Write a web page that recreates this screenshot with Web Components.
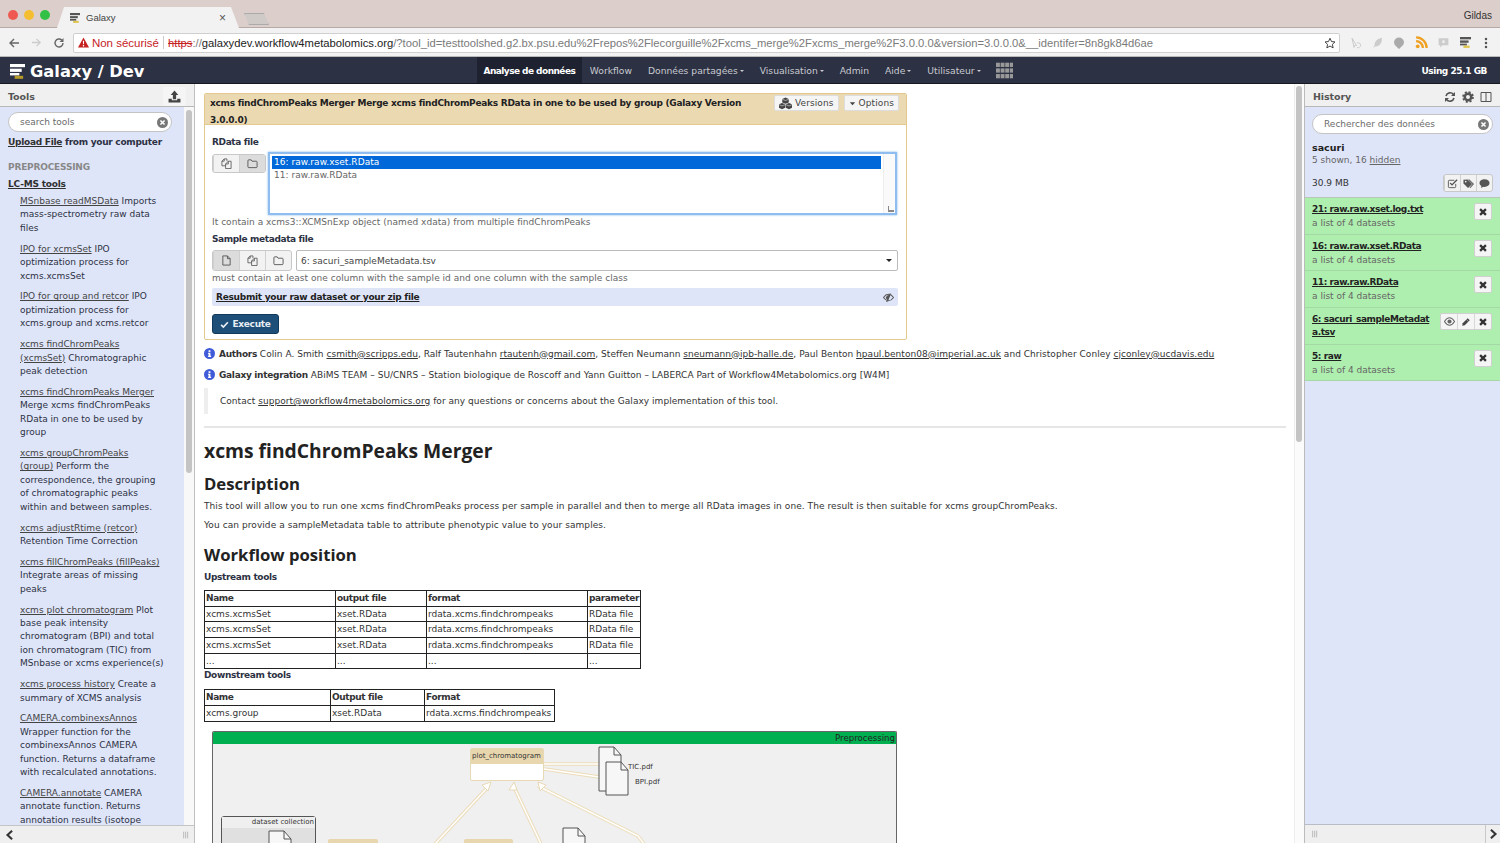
<!DOCTYPE html>
<html lang="fr">
<head>
<meta charset="utf-8">
<title>Galaxy</title>
<style>
html, body { margin: 0; padding: 0; height: 843px; overflow: hidden; background: #fff; }
body { font-family: "DejaVu Sans", sans-serif; font-size: 9px; color: #2c3143; display: flex; flex-direction: column; }
a { color: #303030; text-decoration: underline; }
</style>
</head>
<body>
<browser-chrome></browser-chrome>
<galaxy-masthead></galaxy-masthead>
<galaxy-layout>
  <tools-panel slot="left"></tools-panel>
  <center-panel slot="center"></center-panel>
  <history-panel slot="right"></history-panel>
</galaxy-layout>

<script>
// icons, hand drawn on a 24x24 box
const ICONS = {
    times: '<path d="M5 5L19 19M19 5L5 19" fill="none" stroke="currentColor" stroke-width="5.5"/>',
    check: '<path d="M3 13l6 6L21 6" fill="none" stroke="currentColor" stroke-width="4.5"/>',
    files: '<path d="M13 7V2H7L2 7v10h8M7 2v5H2" fill="none" stroke="currentColor" stroke-width="1.8"/><path d="M10 13l6-6h6v16H10zM16 7v6h-6" fill="none" stroke="currentColor" stroke-width="1.8"/>',
    folder: '<path d="M2 19V6q0-2 2-2h5l2 3h9q2 0 2 2v10q0 2-2 2H4q-2 0-2-2z" fill="none" stroke="currentColor" stroke-width="2"/>',
    file: '<path d="M4 2h10l6 6v14H4zM14 2v6h6" fill="none" stroke="currentColor" stroke-width="2"/>',
    eye: '<path d="M1 12q5-8 11-8t11 8q-5 8-11 8T1 12z" fill="none" stroke="currentColor" stroke-width="2.2"/><circle cx="12" cy="12" r="4.5" fill="currentColor"/>',
    eyeoff: '<path d="M1 12q5-7 11-7t11 7q-5 7-11 7T1 12z" fill="none" stroke="currentColor" stroke-width="2.2"/><path d="M6 12q2-5 7-6l3 1-5 12q-4-2-5-7z" fill="currentColor"/><path d="M16 3L8 22" stroke="currentColor" stroke-width="2.5"/>',
    pencil: '<path d="M3 21l1-6L16 3l5 5L9 20z" fill="currentColor"/><path d="M13 6l5 5" stroke="#f5f5f5" stroke-width="1.2"/>',
    cog: '<circle cx="12" cy="12" r="6.5" fill="none" stroke="currentColor" stroke-width="5"/><circle cx="12" cy="12" r="10" fill="none" stroke="currentColor" stroke-width="3.4" stroke-dasharray="4.2 3.65"/>',
    refresh: '<path d="M4 10a8.5 8.5 0 0 1 15-3" fill="none" stroke="currentColor" stroke-width="3.2"/><path d="M22 2v8h-8z" fill="currentColor"/><path d="M20 14a8.5 8.5 0 0 1-15 3" fill="none" stroke="currentColor" stroke-width="3.2"/><path d="M2 22v-8h8z" fill="currentColor"/>',
    columns: '<path d="M2 3h20v18H2zM12 3v18" fill="none" stroke="currentColor" stroke-width="2"/>',
    tags: '<path d="M1 4v8l10 10 9-9L10 3z" fill="currentColor"/><path d="M14 3l10 10-8 9-2-1 7-8L11 3z" fill="currentColor"/><circle cx="6" cy="8" r="1.8" fill="#f5f5f5"/>',
    comment: '<ellipse cx="12" cy="11" rx="11" ry="8.5" fill="currentColor"/><path d="M6 16l-2 6 8-4z" fill="currentColor"/>',
    checkbox: '<path d="M19 13v6q0 2-2 2H5q-2 0-2-2V7q0-2 2-2h11" fill="none" stroke="currentColor" stroke-width="2"/><path d="M7 11l4 4L22 4" fill="none" stroke="currentColor" stroke-width="3"/>',
    upload: '<path d="M12 1l7 8h-4v8H9V9H5z" fill="currentColor"/><path d="M1 16h6v3h10v-3h6v7H1z" fill="currentColor"/>',
    cubes: '<path d="M12 1l6 2.5V10l-6 2.5L6 10V3.5zM5.5 11l6 2.5V20l-6 2.5L0 20v-6.5zM18.5 11l5.5 2.5V20l-5.500 2.5-6-2.5v-6.5z" fill="currentColor"/><path d="M6 4l6 2.5L18 4M0 14l5.5 2.5 6-2.5M12.5 14l6 2.5L24 14" fill="none" stroke="#f5f5f5" stroke-width="1"/>',
    caret: '<path d="M3 8h18l-9 10z" fill="currentColor"/>',
    info: '<circle cx="12" cy="12" r="12" fill="currentColor"/><path d="M10 5h4v3.5h-4zM9 10.5h5V17h1.500v2.5H9V17h1v-4H9z" fill="#fff"/>',
    clear: '<circle cx="12" cy="12" r="12" fill="currentColor"/><path d="M7.5 7.5l9 9M16.5 7.5l-9 9" stroke="#fff" stroke-width="3.4"/>',
    back: '<path d="M22 12H5M12 4l-8 8 8 8" fill="none" stroke="currentColor" stroke-width="2.8"/>',
    forward: '<path d="M2 12h17M12 4l8 8-8 8" fill="none" stroke="currentColor" stroke-width="2.8"/>',
    reload: '<path d="M20 12a8 8 0 1 1-2.5-5.8" fill="none" stroke="currentColor" stroke-width="2.8"/><path d="M21 2v8h-8z" fill="currentColor"/>',
    star: '<path d="M12 2.5l3 6.6 7 .8-5.2 4.8 1.5 7-6.3-3.6-6.3 3.6 1.5-7L2 9.9l7-.8z" fill="none" stroke="currentColor" stroke-width="2"/>',
    warn: '<path d="M12 1L24 23H0z" fill="currentColor"/><path d="M10.6 8h2.800l-.5 8h-1.800zM10.6 17.5h2.800v3h-2.800z" fill="#fff"/>',
    rss: '<circle cx="5" cy="19" r="3.5" fill="currentColor"/><path d="M2 9.5A12.5 12.500 0 0 1 14.5 22M2 2.5A19.5 19.500 0 0 1 21.5 22" fill="none" stroke="currentColor" stroke-width="4.2"/>',
    dots: '<circle cx="12" cy="4" r="2.5" fill="currentColor"/><circle cx="12" cy="12" r="2.5" fill="currentColor"/><circle cx="12" cy="20" r="2.5" fill="currentColor"/>',
    bubble: '<path d="M12 1a10 10 0 0 1 10 10c0 5-5 8-10 13C7 19 2 16 2 11A10 10 0 0 1 12 1z" fill="currentColor"/>',
    cursor: '<path d="M4 2l9 15-3-1-2 5zM14 12a5 5 0 1 1 0 9" fill="none" stroke="currentColor" stroke-width="2"/>',
    feather: '<path d="M20 2C10 3 5 9 5 17l-3 5 4-3c9 0 14-6 14-17z" fill="currentColor"/>',
    chat: '<path d="M3 4h18v13H10l-4 4v-4H3z" fill="currentColor"/><path d="M10 8h4v5h-4z" fill="#f2f2f2"/>',
    grid: '<g fill="currentColor"><rect x="0" y="1" width="5.5" height="6"/><rect x="6.5" y="1" width="5.5" height="6"/><rect x="13" y="1" width="5.5" height="6"/><rect x="19.5" y="1" width="4.5" height="6"/><rect x="0" y="9" width="5.5" height="6"/><rect x="6.5" y="9" width="5.5" height="6"/><rect x="13" y="9" width="5.5" height="6"/><rect x="19.5" y="9" width="4.5" height="6"/><rect x="0" y="17" width="5.5" height="6"/><rect x="6.5" y="17" width="5.5" height="6"/><rect x="13" y="17" width="5.5" height="6"/><rect x="19.5" y="17" width="4.5" height="6"/></g>',
    chevl: '<path d="M17 2L6 12l11 10" fill="none" stroke="currentColor" stroke-width="5"/>',
    chevr: '<path d="M7 2l11 10L7 22" fill="none" stroke="currentColor" stroke-width="5"/>',
    handle: '<path d="M5 2v20M11 2v20M17 2v20" stroke="currentColor" stroke-width="3"/>'
};

class FaIcon extends HTMLElement {
    connectedCallback() {
        if (this.shadowRoot) return;
        this.attachShadow({ mode: 'open' });
        const size = this.getAttribute('size') || 11;
        this.shadowRoot.innerHTML = `
            <style>:host { display: inline-flex; flex: none; } svg { display: block; }</style>
            <svg width="${size}" height="${size}" viewBox="0 0 24 24">${ICONS[this.getAttribute('name')] || ''}</svg>`;
    }
}

// logo bars, used in the tab and the masthead
class GalaxyLogo extends HTMLElement {
    connectedCallback() {
        this.attachShadow({ mode: 'open' });
        const c = this.getAttribute('color') || '#fff';
        const w = this.getAttribute('width') || 16;
        this.shadowRoot.innerHTML = `
            <style>:host { display: inline-flex; flex: none; } svg { display: block; }</style>
            <svg width="${w}" viewBox="0 0 16 16">
                <rect x="0" y="0" width="16" height="3.4" fill="${c}"/>
                <rect x="0" y="5" width="12.5" height="3.4" fill="${c}"/>
                <rect x="0" y="9.6" width="10" height="2.6" fill="${c}"/>
                <rect x="5" y="12.6" width="9" height="3.2" fill="#d9b81f" opacity=".8"/>
            </svg>`;
    }
}

class BrowserChrome extends HTMLElement {
    connectedCallback() {
        this.attachShadow({ mode: 'open' });
        this.shadowRoot.innerHTML = `
            <style>
                :host { display: block; font-family: "Liberation Sans", sans-serif; }
                .strip { height: 28px; box-sizing: border-box; background: #dccfcb; display: flex; align-items: flex-end; padding-left: 8px; border-bottom: 1px solid #b5aaa6; }
                .lights { display: flex; gap: 6px; width: 49px; align-self: flex-start; padding-top: 10px; }
                .lights i { width: 10px; height: 10px; border-radius: 50%; }
                .tab { width: 182px; height: 21px; margin-bottom: -1px; background: #f2f2f2; clip-path: polygon(0 100%, 7px 0, 174px 0, 100% 100%); display: flex; align-items: center; padding-left: 13px; box-sizing: border-box; font-size: 9.5px; color: #444; }
                .tab span { margin-left: 6px; flex: 1; }
                .tab b { font-weight: normal; font-size: 12px; color: #555; margin-right: 13px; }
                .newtab { width: 25px; height: 12px; margin: 0 0 2px 5px; background: #cfcac8; border: 1px solid #aaa; box-sizing: border-box; clip-path: polygon(0 0, 80% 0, 100% 100%, 20% 100%); }
                .user { margin-left: auto; align-self: flex-start; padding: 10px 8px 0 0; font-size: 10px; color: #333; }
                .bar { height: 29px; box-sizing: border-box; background: #f2f2f2; display: flex; align-items: center; padding: 1px 8px 0; border-bottom: 1px solid #b9b9b9; }
                .nav { display: flex; align-items: center; color: #666; gap: 11px; width: 65px; }
                .url { width: 1269px; height: 20px; box-sizing: border-box; background: #fff; border: 1px solid #d0d0d0; border-radius: 2px; display: flex; align-items: center; padding-left: 4px; font-size: 11.24px; white-space: nowrap; overflow: hidden; color: #7a7a7a; position: relative; }
                .warn { color: #c5221f; margin-left: 3px; font-size: 11.5px; }
                .sep { width: 1px; height: 13px; background: #ccc; margin: 0 4px; }
                s { color: #c5221f; }
                .dom { color: #222; }
                .url fa-icon:last-child { position: absolute; right: 3px; top: 3px; color: #444; }
                .ext { display: flex; align-items: center; margin-left: 10px; gap: 9.5px; color: #ccc; }
            </style>
            <div class="strip">
                <div class="lights"><i style="background:#ee5a52"></i><i style="background:#f5bd30"></i><i style="background:#32c146"></i></div>
                <div class="tab"><galaxy-logo color="#555" width="10"></galaxy-logo><span>Galaxy</span><b>×</b></div>
                <div class="newtab"></div>
                <div class="user">Gildas</div>
            </div>
            <div class="bar">
                <div class="nav"><fa-icon name="back" size="12"></fa-icon><fa-icon name="forward" size="11" style="color:#ccc"></fa-icon><fa-icon name="reload" size="12"></fa-icon></div>
                <div class="url">
                    <fa-icon name="warn" size="11" style="color:#c5221f"></fa-icon><span class="warn">Non sécurisé</span><span class="sep"></span><s>https</s>://<span class="dom">galaxydev.workflow4metabolomics.org</span>/?tool_id=testtoolshed.g2.bx.psu.edu%2Frepos%2Flecorguille%2Fxcms_merge%2Fxcms_merge%2F3.0.0.0&amp;version=3.0.0.0&amp;__identifer=8n8gk84d6ae
                    <fa-icon name="star" size="12"></fa-icon>
                </div>
                <div class="ext">
                    <fa-icon name="cursor" size="12"></fa-icon><fa-icon name="feather" size="12"></fa-icon><fa-icon name="bubble" size="12" style="color:#aaa"></fa-icon><fa-icon name="rss" size="13" style="color:#f0a020"></fa-icon><fa-icon name="chat" size="13"></fa-icon><galaxy-logo color="#555" width="11"></galaxy-logo><fa-icon name="dots" size="12" style="color:#555"></fa-icon>
                </div>
            </div>`;
    }
}

class GalaxyMasthead extends HTMLElement {
    connectedCallback() {
        this.attachShadow({ mode: 'open' });
        const items = [
            ['Analyse de données', 0, 1], ['Workflow', 0], ['Données partagées', 1], ['Visualisation', 1],
            ['Admin', 0], ['Aide', 1], ['Utilisateur', 1]
        ];
        const nav = items.map(([t, caret, on]) =>
            `<a class="${on ? 'on' : ''}">${t}${caret ? '<u></u>' : ''}</a>`).join('');
        this.shadowRoot.innerHTML = `
            <style>
                :host { display: flex; height: 27px; box-sizing: border-box; background: #2c3143; border-bottom: 1px solid #16181f; align-items: stretch; color: #ddd; font-size: 9.2px; flex: none; }
                .brand { width: 477px; display: flex; align-items: center; padding: 2px 0 0 10px; box-sizing: border-box; gap: 5px; color: #fff; font-weight: bold; font-size: 16.3px; }
                nav { display: flex; align-items: stretch; }
                a { display: flex; align-items: center; padding: 1px 8px 0; color: #c8cad0; }
                a.on { background: #1d2130; color: #fff; font-weight: bold; padding: 1px 6.5px 0; font-size: 9px; letter-spacing: -.55px; }
                a u { width: 0; height: 0; border: 2.5px solid transparent; border-top-color: #c8cad0; border-bottom: 0; margin-left: 2px; }
                .grid { display: flex; align-items: center; margin-left: 7px; color: #999; }
                .quota { margin-left: auto; align-self: center; padding: 1px 13px 0 0; color: #fff; font-weight: bold; font-size: 9px; letter-spacing: -.45px; }
            </style>
            <div class="brand"><galaxy-logo width="15"></galaxy-logo><span>Galaxy / Dev</span></div>
            <nav>${nav}</nav>
            <div class="grid"><fa-icon name="grid" size="17"></fa-icon></div>
            <div class="quota">Using 25.1 GB</div>`;
    }
}

class GalaxyLayout extends HTMLElement {
    constructor() {
        super();
        this.attachShadow({ mode: 'open' });
        this.shadowRoot.innerHTML = `
            <style>
                :host { display: grid; grid-template-columns: 195px 1110px 195px; height: 759px; flex: none; overflow: hidden; }
                ::slotted(*) { min-width: 0; height: 759px; }
            </style>
            <slot name="left"></slot><slot name="center"></slot><slot name="right"></slot>`;
    }
}

// grey title strip on top of a side panel
class PanelHead extends HTMLElement {
    constructor() {
        super();
        this.attachShadow({ mode: 'open' });
        this.shadowRoot.innerHTML = `
            <style>
                :host { display: flex; align-items: center; height: 23px; box-sizing: border-box; background: #f0f0f0; border-bottom: 1px solid #b8b8b8; padding: 3px 0 0 8px; font-weight: bold; color: #555; font-size: 9.5px; letter-spacing: -.1px; flex: none; }
                .r { margin-left: auto; display: flex; align-items: center; }
            </style>
            <slot></slot><div class="r"><slot name="tools"></slot></div>`;
    }
}

class SearchBox extends HTMLElement {
    connectedCallback() {
        this.attachShadow({ mode: 'open' });
        this.shadowRoot.innerHTML = `
            <style>
                :host { display: flex; align-items: center; box-sizing: border-box; height: 20px; background: #fff; border: 1px solid #c4c4c4; border-radius: 10px; color: #6b6b6b; font-size: 9px; padding: 0 3px 0 11px; }
                span { flex: 1; }
                fa-icon { color: #777; }
            </style>
            <span>${this.getAttribute('placeholder')}</span><fa-icon name="clear" size="11"></fa-icon>`;
    }
}

class ToolLink extends HTMLElement {
    constructor() {
        super();
        this.attachShadow({ mode: 'open' });
    }
    connectedCallback() {
        this.shadowRoot.innerHTML = `
            <style>
                :host { display: block; margin: 0 0 7.5px 20px; line-height: 13.4px; white-space: nowrap; color: #2c3143; }
                a { color: #444; text-decoration: underline; }
            </style>
            <a>${this.getAttribute('name')}</a> <slot></slot>`;
    }
}

class ToolsPanel extends HTMLElement {
    connectedCallback() {
        this.attachShadow({ mode: 'open' });
        this.shadowRoot.innerHTML = `
            <style>
                :host { display: flex; flex-direction: column; position: relative; background: #f8f8f8; border-right: 1px solid #c0c0c0; box-sizing: border-box; overflow: hidden; }
                .body { width: 184px; flex: 1; background: #dfe5f9; padding: 5px 0 0 8px; box-sizing: border-box; overflow: hidden; }
                panel-head { width: 195px; }
                search-box { width: 164px; margin-bottom: 4px; }
                .upload { font-weight: bold; line-height: 13px; letter-spacing: -.27px; }
                a { color: #303030; text-decoration: underline; }
                .sec { color: #888; font-weight: bold; margin-top: 12px; line-height: 13px; letter-spacing: -.2px; }
                .lc { font-weight: bold; margin: 4px 0 4px; line-height: 13px; letter-spacing: -.2px; }
                .list { margin-left: -8px; }
                .thumb { position: absolute; left: 186px; top: 26px; width: 6px; height: 363px; background: #c4c4c4; border-radius: 3px; }
                .foot { height: 18px; flex: none; background: #efefef; border-top: 1px solid #c4c4c4; display: flex; align-items: center; justify-content: space-between; padding: 0 5px; box-sizing: border-box; color: #333; }
                .up { background: #f5f5f5; padding: 3px 5px; margin-right: 9px; color: #444; border-radius: 2px; display: flex; }
            </style>
            <panel-head>Tools<span slot="tools" class="up"><fa-icon name="upload" size="13"></fa-icon></span></panel-head>
            <div class="body">
                <search-box placeholder="search tools"></search-box>
                <div class="upload"><a>Upload File</a> from your computer</div>
                <div class="sec">PREPROCESSING</div>
                <div class="lc"><a>LC-MS tools</a></div>
                <div class="list">
                    <tool-link name="MSnbase readMSData">Imports<br>mass-spectrometry raw data<br>files</tool-link>
                    <tool-link name="IPO for xcmsSet">IPO<br>optimization process for<br>xcms.xcmsSet</tool-link>
                    <tool-link name="IPO for group and retcor">IPO<br>optimization process for<br>xcms.group and xcms.retcor</tool-link>
                    <tool-link name="xcms findChromPeaks<br>(xcmsSet)">Chromatographic<br>peak detection</tool-link>
                    <tool-link name="xcms findChromPeaks Merger"><br>Merge xcms findChromPeaks<br>RData in one to be used by<br>group</tool-link>
                    <tool-link name="xcms groupChromPeaks<br>(group)">Perform the<br>correspondence, the grouping<br>of chromatographic peaks<br>within and between samples.</tool-link>
                    <tool-link name="xcms adjustRtime (retcor)"><br>Retention Time Correction</tool-link>
                    <tool-link name="xcms fillChromPeaks (fillPeaks)"><br>Integrate areas of missing<br>peaks</tool-link>
                    <tool-link name="xcms plot chromatogram">Plot<br>base peak intensity<br>chromatogram (BPI) and total<br>ion chromatogram (TIC) from<br>MSnbase or xcms experience(s)</tool-link>
                    <tool-link name="xcms process history">Create a<br>summary of XCMS analysis</tool-link>
                    <tool-link name="CAMERA.combinexsAnnos"><br>Wrapper function for the<br>combinexsAnnos CAMERA<br>function. Returns a dataframe<br>with recalculated annotations.</tool-link>
                    <tool-link name="CAMERA.annotate">CAMERA<br>annotate function. Returns<br>annotation results (isotope</tool-link>
                </div>
            </div>
            <div class="thumb"></div>
            <div class="foot"><fa-icon name="chevl" size="10"></fa-icon><fa-icon name="handle" size="8" style="color:#bbb;margin-right:-1px"></fa-icon></div>`;
    }
}

class IconBtns extends HTMLElement {
    connectedCallback() {
        this.attachShadow({ mode: 'open' });
        const on = this.getAttribute('active');
        const h = this.getAttribute('height') || 18;
        const w = this.getAttribute('cell') || 26;
        const names = this.getAttribute('icons').split(' ');
        this.shadowRoot.innerHTML = `
            <style>
                :host { display: inline-flex; flex: none; align-self: flex-start; border: 1px solid #c8c8c8; border-radius: 3px; overflow: hidden; background: #f2f2f2; color: #555; }
                span { display: flex; align-items: center; justify-content: center; width: ${w}px; height: ${h}px; box-sizing: border-box; border-left: 1px solid #d0d0d0; }
                span:first-child { border-left: 0; }
                span.on { background: #dcdcdc; }
            </style>
            ${names.map(n => `<span class="${n === on ? 'on' : ''}"><fa-icon name="${n}" size="11"></fa-icon></span>`).join('')}`;
    }
}

class FormField extends HTMLElement {
    constructor() {
        super();
        this.attachShadow({ mode: 'open' });
        this.shadowRoot.innerHTML = `
            <style>
                :host { display: block; padding: 0 8px 0 7px; }
                .label { font-weight: bold; line-height: 13px; color: #2c3143; letter-spacing: -.38px; }
                .row { display: flex; align-items: flex-start; }
                .help { color: #666; line-height: 13px; padding-top: 1px; letter-spacing: .03px; }
            </style>
            <div class="label"><slot name="label"></slot></div>
            <div class="row"><slot name="input"></slot></div>
            <div class="help"><slot name="help"></slot></div>`;
    }
}

class ToolForm extends HTMLElement {
    connectedCallback() {
        this.attachShadow({ mode: 'open' });
        this.shadowRoot.innerHTML = `
            <style>
                :host { display: block; width: 703px; height: 247px; box-sizing: border-box; border: 1px solid #e3c98f; border-radius: 2px; background: #fff; overflow: hidden; }
                .head { height: 31px; box-sizing: border-box; background: #ebd9b2; border-bottom: 1px solid #e3c98f; padding: 1px 5px; display: flex; font-weight: bold; line-height: 17px; color: #222; }
                .title { width: 565px; letter-spacing: -.27px; }
                .btn { display: inline-flex; align-items: center; gap: 3px; height: 16px; box-sizing: border-box; padding: 0 4px; background: #f5f5f5; border: 1px solid #ddd; border-radius: 2px; font-weight: normal; color: #444; letter-spacing: .1px; }
                .btns { display: flex; gap: 5px; margin-left: auto; margin-right: 2px; }
                form-field.one { margin-top: 11px; }
                form-field.two { margin-top: 4px; }
                .sel { margin: -2px 0 0 2px; width: 629px; height: 63px; box-sizing: border-box; border: 2px solid #8fbdf0; box-shadow: 0 0 2px #7fb3ec; position: relative; padding: 2px; line-height: 13px; color: #666; letter-spacing: .05px; }
                .sel .picked { background: #0068d8; color: #fff; width: 609px; padding-left: 2px; box-sizing: border-box; height: 12.5px; line-height: 12px; }
                .sel .item { padding-left: 2px; }
                .sel .bar { position: absolute; right: 0; top: 0; bottom: 0; width: 11px; background: #fafafa; border-left: 1px solid #eee; }
                .sel .grip { position: absolute; right: 1px; bottom: 1px; width: 5px; height: 4px; border-left: 1px solid #888; border-bottom: 2px solid #888; }
                .drop { margin-left: 4px; flex: 1; height: 21px; box-sizing: border-box; border: 1px solid #bbb; border-radius: 2px; display: flex; align-items: center; padding: 0 5px 0 4px; color: #444; }
                .drop i { margin-left: auto; width: 0; height: 0; border: 3.5px solid transparent; border-top-color: #222; border-bottom: 0; }
                .sect { margin: 3px 8px 0 7px; height: 18px; box-sizing: border-box; background: #dfe5f9; border-radius: 2px; display: flex; align-items: center; padding: 0 4px; font-weight: bold; letter-spacing: -.27px; }
                .sect a { color: #222; text-decoration: underline; flex: 1; }
                .exec { margin: 8px 0 0 7px; width: 67px; height: 20px; box-sizing: border-box; background: #1d4f78; border: 1px solid #123a5c; border-radius: 3px; color: #e8eef3; font-weight: bold; display: flex; align-items: center; justify-content: center; gap: 3px; letter-spacing: -.3px; }
            </style>
            <div class="head">
                <div class="title">xcms findChromPeaks Merger Merge xcms findChromPeaks RData in one to be used by group (Galaxy Version 3.0.0.0)</div>
                <div class="btns">
                    <span class="btn"><fa-icon name="cubes" size="13"></fa-icon>Versions</span>
                    <span class="btn"><fa-icon name="caret" size="7"></fa-icon>Options</span>
                </div>
            </div>
            <form-field class="one">
                <span slot="label">RData file</span>
                <div slot="input" style="display:flex;padding-top:5px">
                    <icon-btns icons="files folder" active="folder" cell="26" height="17"></icon-btns>
                    <div class="sel">
                        <div class="picked">16: raw.raw.xset.RData</div>
                        <div class="item">11: raw.raw.RData</div>
                        <div class="bar"></div><div class="grip"></div>
                    </div>
                </div>
                <span slot="help">It contain a xcms3::XCMSnExp object (named xdata) from multiple findChromPeaks</span>
            </form-field>
            <form-field class="two">
                <span slot="label">Sample metadata file</span>
                <div slot="input" style="display:flex;width:100%;padding-top:4px">
                    <icon-btns icons="file files folder" active="file" cell="26" height="19"></icon-btns>
                    <div class="drop">6: sacuri_sampleMetadata.tsv<i></i></div>
                </div>
                <span slot="help">must contain at least one column with the sample id and one column with the sample class</span>
            </form-field>
            <div class="sect"><a>Resubmit your raw dataset or your zip file</a><fa-icon name="eyeoff" size="11" style="color:#555"></fa-icon></div>
            <div class="exec"><fa-icon name="check" size="9"></fa-icon>Execute</div>`;
    }
}

class InfoLine extends HTMLElement {
    constructor() {
        super();
        this.attachShadow({ mode: 'open' });
        this.shadowRoot.innerHTML = `
            <style>
                :host { display: flex; align-items: center; gap: 4px; height: 21px; white-space: nowrap; color: #333; }
                fa-icon { color: #3f5bd8; }
                ::slotted(a) { color: #333; }
                ::slotted(b) { letter-spacing: -.3px; }
            </style>
            <fa-icon name="info" size="11"></fa-icon><div><slot></slot></div>`;
    }
}

class DataTable extends HTMLElement {
    connectedCallback() {
        this.attachShadow({ mode: 'open' });
        const cols = this.getAttribute('cols').split(',');
        const rows = JSON.parse(this.getAttribute('rows'));
        const total = cols.reduce((a, b) => a + Number(b), 0);
        this.shadowRoot.innerHTML = `
            <style>
                :host { display: block; }
                table { border-collapse: collapse; table-layout: fixed; width: ${total}px; color: #333; }
                td { border: 1px solid #222; padding: 0 1px; height: 14.7px; line-height: 13px; white-space: nowrap; overflow: hidden; }
                tr:first-child td { font-weight: bold; letter-spacing: -.38px; }
            </style>
            <table>
                <colgroup>${cols.map(c => `<col style="width:${c}px">`).join('')}</colgroup>
                ${rows.map(r => `<tr>${r.map(c => `<td>${c}</td>`).join('')}</tr>`).join('')}
            </table>`;
    }
}

// picture of the workflow, nodes sit where the drawing has them
class WorkflowDiagram extends HTMLElement {
    connectedCallback() {
        this.attachShadow({ mode: 'open' });
        const doc = (x, y, h = 44) => `<path d="M${x} ${y}h15l7 8v${h - 8}h-22z" fill="#f7f7f7" stroke="#555"/><path d="M${x + 15} ${y}v8h7" fill="none" stroke="#555"/>`;
        const arrow = (x1, y1, x2, y2) => {
            return `<path d="M${x1} ${y1}L${x2} ${y2}" stroke="#ecdcb8" stroke-width="3.5"/><path d="M${x1} ${y1}L${x2} ${y2}" stroke="#fff" stroke-width="1.5"/>`;
        };
        this.shadowRoot.innerHTML = `
            <style>
                :host { display: block; position: relative; width: 685px; height: 130px; box-sizing: border-box; border: 1px solid #666; border-bottom: 0; border-radius: 2px 2px 0 0; background: #f0f0f0; overflow: hidden; }
                .top { height: 12px; background: #00b050; text-align: right; padding-right: 1px; line-height: 13px; color: #222; font-size: 8.6px; }
                svg { position: absolute; left: 0; top: 0; }
                .node { position: absolute; box-sizing: border-box; border: 1px solid #e8d9b5; border-radius: 2px; background: #fff; }
                .node div { background: #e8d7ae; height: 15px; line-height: 15px; padding-left: 1px; color: #333; font-size: 7px; white-space: nowrap; }
                .lab { position: absolute; font-size: 7px; color: #333; }
                .coll { position: absolute; left: 8px; top: 84px; width: 95px; height: 60px; box-sizing: border-box; border: 1px solid #555; border-radius: 3px; background: #e0e0e0; }
                .coll div { background: #efefef; height: 11px; line-height: 11px; text-align: right; padding-right: 1px; font-size: 7px; color: #333; }
            </style>
            <div class="top">Preprocessing</div>
            <div class="coll"><div>dataset collection</div></div>
            <div class="node" style="left:257px;top:16px;width:74px;height:33px"><div>plot_chromatogram</div></div>
            <div class="node" style="left:115px;top:107px;width:50px;height:40px;border:0;background:#e8d7ae"></div>
            <div class="node" style="left:251px;top:107px;width:49px;height:40px;border:0;background:#e8d7ae"></div>
            <svg width="685" height="130">
                ${arrow(331, 32, 388, 32)}
                ${arrow(331, 37, 393, 46)}
                ${arrow(222, 112, 275, 55)}
                ${arrow(328, 112, 301, 55)}
                ${arrow(431, 112, 425, 104)}
                ${arrow(425, 104, 325, 54)}
                <path d="M278 50l-9 3 6 6zM301 50l-5 8 8 0zM325 50l2 9 6-6z" fill="#fff" stroke="#e8d9b5"/>
                ${doc(386, 15, 44)}
                ${doc(393, 30, 33)}
                ${doc(56, 99, 40)}
                ${doc(350, 96, 40)}
            </svg>
            <span class="lab" style="left:415px;top:31px">TIC.pdf</span>
            <span class="lab" style="left:422px;top:46px">BPI.pdf</span>`;
    }
}

class CenterPanel extends HTMLElement {
    connectedCallback() {
        this.attachShadow({ mode: 'open' });
        const up = [['Name', 'output file', 'format', 'parameter'],
            ['xcms.xcmsSet', 'xset.RData', 'rdata.xcms.findchrompeaks', 'RData file'],
            ['xcms.xcmsSet', 'xset.RData', 'rdata.xcms.findchrompeaks', 'RData file'],
            ['xcms.xcmsSet', 'xset.RData', 'rdata.xcms.findchrompeaks', 'RData file'],
            ['...', '...', '...', '...']];
        const down = [['Name', 'Output file', 'Format'], ['xcms.group', 'xset.RData', 'rdata.xcms.findchrompeaks']];
        this.shadowRoot.innerHTML = `
            <style>
                :host { display: block; position: relative; overflow: hidden; background: #fff; font-size: 9px; color: #333; }
                .scroll { padding: 9px 0 0 9px; height: 100%; box-sizing: border-box; }
                a { color: #333; text-decoration: underline; }
                .infos { margin-top: 3px; letter-spacing: .03px; }
                .contact { margin: 3px 0 0 0; padding-left: 12px; height: 26px; line-height: 26px; border-left: 4px solid #eee; letter-spacing: .04px; }
                hr { border: 0; border-top: 2px solid #e6e6e6; margin: 12px 0 0; width: 1082px; }
                h1, h2 { font-family: "Open Sans", sans-serif; color: #222; }
                h1 { font-size: 19.3px; line-height: 24px; margin: 11px 0 0; }
                h2 { font-size: 16.7px; line-height: 20px; margin: 11px 0 0; }
                p { margin: 6px 0 0; line-height: 13px; letter-spacing: .07px; }
                h3 { font-size: 9px; margin: 6px 0 0; line-height: 13px; color: #2c3143; letter-spacing: -.35px; }
                h2.wf { margin-top: 13px; }
                h3.dn { margin-top: 0; }
                data-table { margin-top: 6px; }
                h3.dn + data-table { margin-top: 7px; }
                workflow-diagram { margin: 9px 0 0 8px; }
                .thumb { position: absolute; left: 1101px; top: 2px; width: 6px; height: 356px; background: #c4c4c4; border-radius: 3px; }
                .gut { position: absolute; right: 0; top: 0; bottom: 0; width: 11px; background: #fbfbfb; border-left: 1px solid #eee; border-right: 1px solid #bbb; box-sizing: border-box; }
            </style>
            <div class="gut"></div>
            <div class="thumb"></div>
            <div class="scroll">
                <tool-form></tool-form>
                <div class="infos">
                    <info-line><b>Authors</b>&nbsp;Colin A. Smith <a href="#">csmith@scripps.edu</a>, Ralf Tautenhahn <a href="#">rtautenh@gmail.com</a>, Steffen Neumann <a href="#">sneumann@ipb-halle.de</a>, Paul Benton <a href="#">hpaul.benton08@imperial.ac.uk</a> and Christopher Conley <a href="#">cjconley@ucdavis.edu</a></info-line>
                    <info-line><b>Galaxy integration</b>&nbsp;ABiMS TEAM – SU/CNRS – Station biologique de Roscoff and Yann Guitton – LABERCA Part of Workflow4Metabolomics.org [W4M]</info-line>
                </div>
                <div class="contact">Contact <a>support@workflow4metabolomics.org</a> for any questions or concerns about the Galaxy implementation of this tool.</div>
                <hr>
                <h1>xcms findChromPeaks Merger</h1>
                <h2>Description</h2>
                <p>This tool will allow you to run one xcms findChromPeaks process per sample in parallel and then to merge all RData images in one. The result is then suitable for xcms groupChromPeaks.</p>
                <p>You can provide a sampleMetadata table to attribute phenotypic value to your samples.</p>
                <h2 class="wf">Workflow position</h2>
                <h3>Upstream tools</h3>
                <data-table cols="131,91,161,53" rows='${JSON.stringify(up)}'></data-table>
                <h3 class="dn">Downstream tools</h3>
                <data-table cols="126,94,130" rows='${JSON.stringify(down)}'></data-table>
                <workflow-diagram></workflow-diagram>
            </div>`;
    }
}

class HistoryItem extends HTMLElement {
    connectedCallback() {
        this.attachShadow({ mode: 'open' });
        const sub = this.getAttribute('sub');
        const extra = this.hasAttribute('tools');
        this.shadowRoot.innerHTML = `
            <style>
                :host { display: flex; height: 36.7px; box-sizing: border-box; background: #aeeeae; border-bottom: 1px solid #a4d8a4; padding: 5px 8px 0 7px; justify-content: space-between; }
                .t { font-weight: bold; color: #222; text-decoration: underline; line-height: 13px; letter-spacing: -.42px; white-space: nowrap; }
                .s { color: #666; line-height: 13px; margin-top: 1px; }
                .tools { display: inline-flex; align-self: flex-start; border: 1px solid #d0d0d0; border-radius: 2px; background: #f5f5f5; color: #333; }
                .tools span { display: flex; width: 16px; height: 15px; align-items: center; justify-content: center; border-left: 1px solid #d8d8d8; }
                .tools span:first-child { border-left: 0; }
            </style>
            <div><div class="t">${this.getAttribute('name')}</div>${sub ? `<div class="s">${sub}</div>` : ''}</div>
            <div class="tools">
                ${extra ? '<span><fa-icon name="eye" size="11" style="color:#666"></fa-icon></span><span><fa-icon name="pencil" size="10" style="color:#444"></fa-icon></span>' : ''}
                <span><fa-icon name="times" size="10"></fa-icon></span>
            </div>`;
    }
}

class HistoryPanel extends HTMLElement {
    connectedCallback() {
        this.attachShadow({ mode: 'open' });
        const sub = 'a list of 4 datasets';
        this.shadowRoot.innerHTML = `
            <style>
                :host { display: flex; flex-direction: column; overflow: hidden; background: #dfe5f9; }
                .ic { display: flex; gap: 6px; padding-right: 8px; color: #555; }
                .top { padding: 7px 7px 0 7px; }
                .name { font-weight: bold; margin-top: 7px; line-height: 13px; font-size: 9.5px; color: #222; }
                .count { color: #666; line-height: 13px; }
                .count a { color: #666; text-decoration: underline; }
                .size { display: flex; justify-content: space-between; align-items: center; margin: 7px 0 5px; height: 18px; color: #333; }
                .list { border-top: 1px solid #b8c8b8; }
                .spacer { flex: 1; }
                .foot { height: 19px; flex: none; background: #efefef; border-top: 1px solid #b8bcc8; display: flex; align-items: center; justify-content: space-between; padding-left: 6px; box-sizing: border-box; }
                .foot span { border-left: 1px solid #c8c8c8; height: 100%; width: 15px; display: flex; align-items: center; justify-content: center; color: #333; box-sizing: border-box; }
            </style>
            <panel-head>History
                <span slot="tools" class="ic"><fa-icon name="refresh" size="12"></fa-icon><fa-icon name="cog" size="12"></fa-icon><fa-icon name="columns" size="12"></fa-icon></span>
            </panel-head>
            <div class="top">
                <search-box placeholder="Rechercher des données"></search-box>
                <div class="name">sacuri</div>
                <div class="count">5 shown, 16 <a>hidden</a></div>
                <div class="size">30.9 MB<icon-btns icons="checkbox tags comment" cell="16" height="16" style="align-self:center"></icon-btns></div>
            </div>
            <div class="list">
                <history-item name="21: raw.raw.xset.log.txt" sub="${sub}"></history-item>
                <history-item name="16: raw.raw.xset.RData" sub="${sub}"></history-item>
                <history-item name="11: raw.raw.RData" sub="${sub}"></history-item>
                <history-item name="6: sacuri_sampleMetadat&lt;br&gt;a.tsv" tools></history-item>
                <history-item name="5: raw" sub="${sub}"></history-item>
            </div>
            <div class="spacer"></div>
            <div class="foot"><fa-icon name="handle" size="8" style="color:#bbb"></fa-icon><span><fa-icon name="chevr" size="10"></fa-icon></span></div>`;
    }
}

customElements.define('fa-icon', FaIcon);
customElements.define('galaxy-logo', GalaxyLogo);
customElements.define('browser-chrome', BrowserChrome);
customElements.define('galaxy-masthead', GalaxyMasthead);
customElements.define('galaxy-layout', GalaxyLayout);
customElements.define('panel-head', PanelHead);
customElements.define('search-box', SearchBox);
customElements.define('tool-link', ToolLink);
customElements.define('tools-panel', ToolsPanel);
customElements.define('icon-btns', IconBtns);
customElements.define('form-field', FormField);
customElements.define('tool-form', ToolForm);
customElements.define('info-line', InfoLine);
customElements.define('data-table', DataTable);
customElements.define('workflow-diagram', WorkflowDiagram);
customElements.define('center-panel', CenterPanel);
customElements.define('history-item', HistoryItem);
customElements.define('history-panel', HistoryPanel);
</script>
</body>
</html>
